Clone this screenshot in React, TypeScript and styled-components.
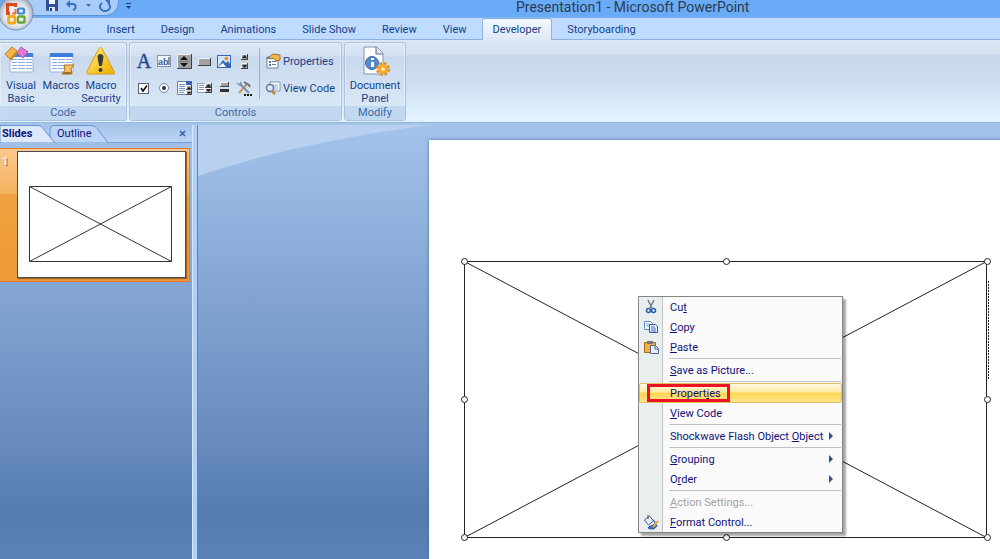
import React from "react";
import styled, { createGlobalStyle, css } from "styled-components";

const Global = createGlobalStyle`
  * { box-sizing: border-box; }
  body { margin: 0; font-family: Roboto, "Open Sans", sans-serif; font-size: 11px; line-height: 13px; color: #15428b; }
  button { font: inherit; color: inherit; background: none; border: 0; padding: 0; margin: 0; }
  svg { display: block; flex: none; }
`;

const Page = styled.div`
  display: flex;
  flex-direction: column;
  height: 100vh;
  overflow: hidden;
`;

const TitleBar = styled.header`
  position: relative;
  display: flex;
  align-items: flex-start;
  height: 18px;
  flex: none;
  background: #6aabf7;
  border-bottom: 1px solid #7fb3f3;
`;

const Title = styled.h1`
  flex: 1;
  margin: 0;
  padding-left: 377px;
  font-size: 14px;
  line-height: 14px;
  font-weight: 400;
  color: #2c3b52;
  white-space: nowrap;
`;

const Orb = styled.button`
  position: absolute;
  left: -2px;
  top: -5px;
  z-index: 2;
`;

const QuickAccess = styled.div`
  display: flex;
  align-items: center;
  gap: 8px;
  width: 92px;
  height: 16px;
  margin-left: 27px;
  padding: 0 12px 4px 18px;
  background: #a9cdf9;
  border: 1px solid #5c93db;
  border-top: 0;
  border-radius: 0 0 14px 0;
`;

const More = styled.button`
  padding-left: 6px;
  height: 12px;
  width: 20px;
`;

const TabBar = styled.nav`
  display: flex;
  align-items: flex-end;
  height: 22px;
  flex: none;
  padding-left: 40px;
  gap: 4px;
  background: #bfdbff;
  border-bottom: 1px solid #8db2e3;
`;

const Tab = styled.button<{ $active?: boolean }>`
  height: 21px;
  padding: 0 10px;
  border: 1px solid transparent;
  border-bottom: 0;
  border-radius: 3px 3px 0 0;
  white-space: nowrap;
  ${(p) =>
    p.$active &&
    css`
      height: 22px;
      margin-bottom: -1px;
      border-color: #8db2e3;
      background: linear-gradient(#f2f8ff, #dfe9f5);
    `}
`;

const Ribbon = styled.section`
  display: flex;
  gap: 2px;
  height: 83px;
  flex: none;
  padding: 2px 0;
  background: linear-gradient(#dbe6f3 0, #d5e1f0 14px, #c7d8ed 15px, #cfdff1 45px, #e2f3ff 78px, #e2f3ff);
  border-bottom: 1px solid #92b6dc;
`;

const GroupBody = styled.div`
  display: flex;
  flex: 1;
  padding: 0 3px;
`;

const Group = styled.div<{ $first?: boolean }>`
  display: flex;
  flex-direction: column;
  height: 79px;
  border: 1px solid #a9c3e2;
  border-radius: 3px;
  background: linear-gradient(#dee8f5 0, #d3e0f0 13px, #c9d9ed 14px, #d9e8f6 63px);
  box-shadow: inset 0 0 0 1px rgba(255, 255, 255, 0.35);
  ${(p) =>
    p.$first &&
    css`
      border-left: 0;
      border-radius: 0 3px 3px 0;
      ${GroupBody} { padding: 0 5px 0 1px; }
    `}
`;

const GroupLabel = styled.div`
  height: 14px;
  line-height: 14px;
  text-align: center;
  color: #3e6aaa;
  background: #c1d8f0;
  border-radius: 0 0 2px 2px;
`;

const BigButton = styled.button<{ $wide?: boolean }>`
  display: flex;
  flex-direction: column;
  align-items: center;
  gap: 1px;
  width: ${(p) => (p.$wide ? 54 : 40)}px;
  padding-top: 3px;
  span { white-space: nowrap; }
`;

const ToolGrid = styled.div`
  display: grid;
  grid-template-columns: repeat(6, 16px);
  grid-auto-rows: 16px;
  gap: 11px 4px;
  padding: 10px 7px 0 3px;
`;

const ToolButton = styled.button`
  width: 16px;
  height: 16px;
`;

const SideTools = styled.div`
  display: flex;
  flex-direction: column;
  gap: 11px;
  min-width: 79px;
  height: 51px;
  margin-top: 5px;
  padding: 5px 0 0 5px;
  border-left: 1px solid #8fb0de;
`;

const LineButton = styled.button`
  display: flex;
  align-items: center;
  gap: 2px;
  height: 16px;
  white-space: nowrap;
`;

const Work = styled.main`
  display: flex;
  flex: 1;
  min-height: 0;
  border-top: 2px solid #a5c4e8;
`;

const fade = css`
  background: linear-gradient(#a3c3ec, #84a5d3 38%, #688bbd 73%, #547cb0 89%, #5a82b8);
`;

const SlidePanel = styled.aside`
  display: flex;
  flex-direction: column;
  width: 192px;
  flex: none;
  ${fade}
`;

const PanelTabs = styled.div`
  position: relative;
  display: flex;
  height: 18px;
  flex: none;
  background: linear-gradient(#a5c3ea, #bcd4f4);
  border-bottom: 1px solid #7ba0d4;
`;

const PanelShapes = styled.svg`
  position: absolute;
  left: 0;
  top: 0;
`;

const PanelTab = styled.button<{ $bold?: boolean }>`
  position: relative;
  height: 17px;
  width: ${(p) => (p.$bold ? 43 : 62)}px;
  padding-left: ${(p) => (p.$bold ? 2 : 14)}px;
  text-align: left;
  font-weight: ${(p) => (p.$bold ? 700 : 400)};
  color: #10127c;
`;

const CloseButton = styled.button`
  margin-left: auto;
  padding-right: 6px;
`;

const Thumb = styled.button`
  display: flex;
  height: 134px;
  margin: 5px 2px 0 0;
  padding: 2px 3px 3px 0;
  background: linear-gradient(#fbc98c, #f3b25f 44px, #efa13f 46px, #ee9a34);
  border: 1px solid #e2782a;
  border-left: 0;
`;

const ThumbNumber = styled.span`
  width: 17px;
  flex: none;
  padding: 4px 0 0 2px;
  text-align: left;
  font-weight: 700;
  color: #fff;
  text-shadow: 1px 1px 0 #8d6b3c;
`;

const ThumbPage = styled.span`
  display: block;
  flex: 1;
  height: 127px;
  background: #fff;
  border: 1px solid #4b4b55;
  box-shadow: 1px 1px 1px #a06620;
  padding: 34px 13px 16px 11px;
`;

const Splitter = styled.div`
  width: 6px;
  flex: none;
  background: #aed0fb;
  border-left: 1px solid #d6e6fb;
  border-right: 1px solid #5585cd;
`;

const Stage = styled.div`
  position: relative;
  display: flex;
  flex: 1;
  min-width: 0;
  padding: 15px 0 0 231px;
  ${fade}
`;

const Swoosh = styled.svg`
  position: absolute;
  left: 0;
  top: 0;
`;

const Slide = styled.div`
  position: relative;
  flex: 1;
  background: #fff;
  box-shadow: 0 0 3px #49699a;
`;

const FlashObject = styled.div`
  position: absolute;
  left: 31px;
  top: 117px;
`;

const Menu = styled.div`
  position: absolute;
  left: 209px;
  top: 156px;
  width: 205px;
  border: 1px solid #868686;
  background: linear-gradient(90deg, #e9eeee 23px, #c5c5c5 23px, #c5c5c5 24px, #fafafa 24px);
  box-shadow: 3px 3px 2px rgba(0, 0, 0, 0.35);
`;

const MenuItem = styled.button<{ $hot?: boolean; $off?: boolean }>`
  position: relative;
  display: flex;
  align-items: center;
  width: 100%;
  height: 20px;
  padding: 0 7px 0 3px;
  border: 1px solid transparent;
  color: ${(p) => (p.$off ? "#a3a3a3" : "#10127c")};
  white-space: nowrap;
  ${(p) =>
    p.$hot &&
    css`
      border-color: #e3bd62;
      border-radius: 2px;
      background: linear-gradient(#fffbe3, #ffeaa0 45%, #ffd452 50%, #ffe68c);
    `}
`;

const MenuIcon = styled.span`
  width: 27px;
  flex: none;
`;

const MenuText = styled.span`
  flex: 1;
  text-align: left;
`;

const Sep = styled.div`
  height: 1px;
  margin: 1px 1px 1px 30px;
  background: #c0c0c0;
`;

const RedFrame = styled.span`
  position: absolute;
  left: 7px;
  top: 0;
  width: 83px;
  height: 18px;
  border: 3px solid #ea1424;
`;

const Svg = ({ s = 16, children }: { s?: number; children: React.ReactNode }) => (
  <svg width={s} height={s} viewBox={`0 0 ${s} ${s}`} aria-hidden="true">{children}</svg>
);

const OfficeOrb = () => (
  <svg width="38" height="38" viewBox="0 0 38 38" aria-hidden="true">
    <defs>
      <radialGradient id="orb" cx="50%" cy="55%" r="50%">
        <stop offset="0" stopColor="#fff" /><stop offset="0.7" stopColor="#e2e6ee" /><stop offset="1" stopColor="#a9b4c6" />
      </radialGradient>
    </defs>
    <circle cx="18" cy="18" r="17" fill="url(#orb)" stroke="#7b8ca8" />
    <g fill="none">
      <path d="M17.500 12V9.500h-8v9H12" stroke="#dc4a1c" strokeWidth="3" />
      <path d="M17.500 14v4.500H14" stroke="#e8703a" strokeWidth="2" />
      <rect x="20" y="13.500" width="6" height="5" rx="1" stroke="#3b84d4" strokeWidth="2.200" />
      <rect x="10.500" y="21.500" width="6.500" height="6.500" rx="1" stroke="#f2ab16" strokeWidth="2.800" />
      <rect x="20" y="21.500" width="6.500" height="6" rx="1" stroke="#6aa63c" strokeWidth="2.400" />
    </g>
  </svg>
);

const Save = () => (
  <Svg s={12}><path d="M0 0h12v11H1L0 10z" fill="#2f4fa0" /><path d="M3 0h6v4H3z" fill="#fff" /><path d="M3 7h6v4H3z" fill="#dfe6f5" /><path d="M4 8h2v3H4z" fill="#223a80" /></Svg>
);
const Undo = () => (
  <Svg s={12}><path d="M2 4h5c3 0 4 5 0 6" fill="none" stroke="#3a6fc4" strokeWidth="2" /><path d="M0 4l4-4v8z" fill="#3a6fc4" /></Svg>
);
const Redo = () => (
  <Svg s={12}><path d="M9 3a5 4.500 0 1 1-6 0" fill="none" stroke="#3a6fc4" strokeWidth="2" /><path d="M6 0h5v5z" fill="#3a6fc4" /></Svg>
);

const Sheet = () => (
  <>
    <path d="M5 8h23v18H5z" fill="#fff" stroke="#9db3d6" />
    <path d="M5 7h23v4H5z" fill="#3f7fdb" />
    <path d="M7 13h5v1H7zm6 0h7v1h-7zm8 0h6v1h-6zM7 16h5v1H7zm6 0h7v1h-7zm8 0h6v1h-6zM7 19h5v1H7zm6 0h7v1h-7zm8 0h6v1h-6zM7 22h5v1H7zm6 0h7v1h-7zm8 0h6v1h-6z" fill="#8ea9d8" />
  </>
);
const VisualBasic = () => (
  <Svg s={32}><Sheet /><path d="M0 8l7-7 5 4-7 8z" fill="#f4b64a" stroke="#c07c18" /><path d="M5 13l7-8v3l-6 7z" fill="#c98a24" /><path d="M16 1l7 5-5 6-6-5z" fill="#e17cd6" stroke="#b650ad" /></Svg>
);
const Macros = () => (
  <Svg s={32}><Sheet /><path d="M19 19h10l-3 4 1 5H17l3-4z" fill="#f3c163" stroke="#a86e1c" /><path d="M18 27h8" stroke="#a86e1c" strokeWidth="2" /></Svg>
);
const Warning = () => (
  <svg width="32" height="32" viewBox="0 0 32 32" aria-hidden="true">
    <defs><linearGradient id="warn" x2="1" y2="1"><stop offset="0" stopColor="#fff27a" /><stop offset="1" stopColor="#f0aa00" /></linearGradient></defs>
    <path d="M15.500 1.500c.8 0 1.300.5 1.700 1.200l12 23c.8 1.600.1 2.300-1.200 2.300H3c-1.300 0-2-.8-1.200-2.300l12-23c.4-.7.900-1.200 1.700-1.200z" fill="url(#warn)" stroke="#d79a16" />
    <path d="M12.500 11c0-4 6-4 6 0l-1.600 9h-2.800z" fill="#3b3b3b" /><circle cx="15.500" cy="24" r="2" fill="#3b3b3b" />
  </svg>
);
const DocPanel = () => (
  <Svg s={32}>
    <path d="M5 1h13l6 6v21H5z" fill="#fcfdff" stroke="#8794ad" /><path d="M17 1v7h7" fill="#dfe6f2" stroke="#5c6c8c" />
    <circle cx="13" cy="17" r="6.500" fill="#5788c8" stroke="#3b6bb0" /><path d="M12 16h3v5h-3zM12 12h3v2h-3z" fill="#fff" />
    <circle cx="24" cy="23" r="5.500" fill="none" stroke="#d98d15" strokeWidth="3" strokeDasharray="2.600 1.720" />
    <circle cx="24" cy="23" r="3.600" fill="#fce39a" stroke="#f0ab2c" strokeWidth="3" />
  </Svg>
);

const TextGlyph = styled.span`
  display: block;
  font-family: "Liberation Serif", serif;
  font-size: 20px;
  line-height: 16px;
  font-weight: 400;
  color: #24488c;
  -webkit-text-stroke: 0.4px #24488c;
`;

const raised = (x: number, y: number, w: number, h: number) => (
  <>
    <rect x={x} y={y} width={w} height={h} fill="#444" />
    <rect x={x} y={y} width={w - 1} height={h - 1} fill="#f2f2f2" />
    <rect x={x + 1} y={y + 1} width={w - 2} height={h - 2} fill="#a2a2a2" />
  </>
);

const tools: { name: string; icon: React.ReactNode }[] = [
  { name: "Label", icon: <TextGlyph>A</TextGlyph> },
  { name: "Text Box", icon: <Svg><rect x="1.500" y="2.500" width="13" height="11" fill="#f4f7fc" stroke="#8291ad" /><text x="2" y="12" fontSize="9" fontWeight="700" fontFamily="Liberation Sans, sans-serif" fill="#3a5fa5">ab</text><path d="M13 4v8" stroke="#333" /></Svg> },
  { name: "Spin Button", icon: <Svg>{raised(1, 1, 15, 15)}<path d="M4 7l4-4 4 4zM4 10l4 4 4-4z" fill="#111" /><path d="M2 8h12v1H2z" fill="#777" /></Svg> },
  { name: "Command Button", icon: <Svg>{raised(2, 5, 13, 8)}</Svg> },
  { name: "Image", icon: <Svg><rect x="1.500" y="2.500" width="13" height="12" fill="#d6e8ff" stroke="#3a66b5" /><path d="M2 14l5-7 3 3 2-2 2 3v3z" fill="#3568b4" /><path d="M2 14l5-4 3 4z" fill="#fff" /><circle cx="10.500" cy="5.500" r="2" fill="#f0893a" /></Svg> },
  { name: "Scroll Bar", icon: <Svg>{raised(5, 1, 7, 6)}{raised(5, 10, 7, 6)}<path d="M6 5l2.500-3L11 5zM6 12l2.500 3 2.500-3z" fill="#222" /><path d="M6 7h5v3H6z" fill="#c9cdd4" /></Svg> },
  { name: "Check Box", icon: <Svg><rect x="2.500" y="3.500" width="10" height="10" fill="#fff" stroke="#53617c" /><path d="M5 8l2 3L11 5.500" fill="none" stroke="#111" strokeWidth="1.600" /></Svg> },
  { name: "Option Button", icon: <Svg><circle cx="8" cy="8" r="4.500" fill="#f4f8ff" stroke="#7585a5" /><circle cx="8" cy="8" r="2" fill="#333" /></Svg> },
  { name: "List Box", icon: <Svg><rect x="1.500" y="1.500" width="14" height="13" fill="#fff" stroke="#6d84ae" /><path d="M3 4.500h6M3 6.500h6M3 8.500h6M3 10.500h6M3 12.500h5" stroke="#7c97c6" />{raised(10, 5, 6, 5)}{raised(10, 10, 6, 5)}<path d="M10 1h6v4h-6z" fill="#3a63ad" /><path d="M11 9l2-2 2 2zM11 12l2 2 2-2z" fill="#111" /></Svg> },
  { name: "Combo Box", icon: <Svg><rect x="1.500" y="3.500" width="14" height="9" fill="#fff" stroke="#8ba0c4" /><path d="M3 5.500h5M3 7.500h5M3 9.500h5" stroke="#7c97c6" />{raised(9, 3, 7, 5)}{raised(9, 8, 7, 5)}<path d="M10 7l2.500-3L15 7zM10 9l2.500 3L15 9z" fill="#222" /></Svg> },
  { name: "Toggle Button", icon: <Svg>{raised(4, 2, 9, 5)}<path d="M4 9h9v3H4z" fill="#333" /><path d="M4 12h8v3H4z" fill="#e6e6e6" /></Svg> },
  { name: "More Controls", icon: <Svg><path d="M3 13L11 4" stroke="#c89a5a" strokeWidth="2" /><path d="M8 2l5 3 1 2" fill="none" stroke="#66758f" strokeWidth="2" /><path d="M4 4l9 9" stroke="#7d8ca6" strokeWidth="2" /><path d="M1 3l3 2 1-3" fill="none" stroke="#7d8ca6" strokeWidth="1.500" /><path d="M8 14h2v2H8zm3 0h2v2h-2zm3 0h2v2h-2z" fill="#111" /></Svg> },
];

const PropsIcon = () => (
  <Svg><path d="M2 4h11v11H2z" fill="#fff" stroke="#6c7f9f" /><path d="M2 4h11v2H2z" fill="#5280c8" /><path d="M4 8h2v2H4zm0 3h2v2H4zM7 8h4v1H7zm0 3h4v1H7z" fill="#5b79ab" /><path d="M4 4l4-3 7 1v5l-4 1-3-3-3 1z" fill="#f2b850" stroke="#a3702a" /></Svg>
);
const CodeIcon = () => (
  <Svg><path d="M5 2h10v9H5z" fill="#fff" stroke="#7f93b5" /><path d="M7 5h6M7 7h6M9 9h4" stroke="#92a8cd" /><circle cx="5" cy="8" r="3.500" fill="#dceaff" stroke="#607596" strokeWidth="1.400" /><path d="M7 11l3 3" stroke="#c8823c" strokeWidth="2.500" /></Svg>
);
const CutIcon = () => (
  <Svg><path d="M5 1l4 8M11 1L7 9" stroke="#6c7c96" strokeWidth="1.500" /><circle cx="5.500" cy="11.500" r="2" fill="none" stroke="#2d5cb0" strokeWidth="1.600" /><circle cx="10.500" cy="11.500" r="2" fill="none" stroke="#2d5cb0" strokeWidth="1.600" /></Svg>
);
const CopyIcon = () => (
  <Svg><path d="M1.500 2.500h6l2 2v6h-8z" fill="#fff" stroke="#5c86c8" /><path d="M3 5h4M3 7h4" stroke="#7ba2dc" /><path d="M6.500 5.500h6l2 2v6h-8z" fill="#eaf2ff" stroke="#33599e" /><path d="M8 8h4M8 10h5M8 12h5" stroke="#3d71c4" /></Svg>
);
const PasteIcon = () => (
  <Svg><path d="M1.500 3.500h11v10h-11z" fill="#eeb040" stroke="#a36c14" /><path d="M4 2h6v3H4z" fill="#777" /><path d="M7.500 6.500h5l3 3v5h-8z" fill="#e6eefb" stroke="#516387" /><path d="M12 7v3h3" fill="none" stroke="#516387" /></Svg>
);
const FormatIcon = () => (
  <Svg><path d="M1.500 6l5-4 4 5-5 4z" fill="#e6edf8" stroke="#4a5f87" /><path d="M5 5V1" stroke="#3b4c70" /><path d="M10 6c3 1 2 4 0 5-2 1-4 1-5 3 4 2 8 1 9-3" fill="#3e73c4" stroke="#254f96" /><path d="M10 13l5-6" stroke="#e9a83a" strokeWidth="2" /></Svg>
);

type Item = { label?: [string, string, string]; icon?: React.ReactNode; sub?: boolean; hot?: boolean; off?: boolean };
const items: Item[] = [
  { label: ["Cu", "t", ""], icon: <CutIcon /> },
  { label: ["", "C", "opy"], icon: <CopyIcon /> },
  { label: ["", "P", "aste"], icon: <PasteIcon /> },
  {},
  { label: ["", "S", "ave as Picture..."] },
  {},
  { label: ["Propert", "i", "es"], hot: true },
  { label: ["", "V", "iew Code"] },
  {},
  { label: ["Shockwave Flash Object ", "O", "bject"], sub: true },
  {},
  { label: ["", "G", "rouping"], sub: true },
  { label: ["O", "r", "der"], sub: true },
  {},
  { label: ["", "A", "ction Settings..."], off: true },
  { label: ["", "F", "ormat Control..."], icon: <FormatIcon /> },
];

const tabs = ["Home", "Insert", "Design", "Animations", "Slide Show", "Review", "View", "Developer", "Storyboarding"];

const handles = [[4, 4], [266, 4], [527, 4], [4, 142], [527, 142], [4, 280], [266, 280], [527, 280]];

export default function App() {
  return (
    <Page>
      <Global />
      <TitleBar>
        <Orb aria-label="Office Button"><OfficeOrb /></Orb>
        <QuickAccess>
          <button aria-label="Save"><Save /></button>
          <button aria-label="Undo"><Undo /></button>
          <button aria-label="Undo history"><svg width="5" height="3"><path d="M0 0h5L2.500 3z" fill="#3a6fc4" /></svg></button>
          <button aria-label="Repeat"><Redo /></button>
        </QuickAccess>
        <More aria-label="Customize Quick Access Toolbar">
          <svg width="7" height="8"><path d="M1 1h5v1H1zM1 4h5L3.500 7z" fill="#1f3f80" /></svg>
        </More>
        <Title>Presentation1 - Microsoft PowerPoint</Title>
      </TitleBar>
      <TabBar>
        {tabs.map((t) => <Tab key={t} $active={t === "Developer"}>{t}</Tab>)}
      </TabBar>
      <Ribbon>
        <Group $first>
          <GroupBody>
            <BigButton><VisualBasic /><span>Visual<br />Basic</span></BigButton>
            <BigButton><Macros /><span>Macros</span></BigButton>
            <BigButton><Warning /><span>Macro<br />Security</span></BigButton>
          </GroupBody>
          <GroupLabel>Code</GroupLabel>
        </Group>
        <Group>
          <GroupBody>
            <ToolGrid>
              {tools.map((t) => <ToolButton key={t.name} aria-label={t.name}>{t.icon}</ToolButton>)}
            </ToolGrid>
            <SideTools>
              <LineButton><PropsIcon />Properties</LineButton>
              <LineButton><CodeIcon />View Code</LineButton>
            </SideTools>
          </GroupBody>
          <GroupLabel>Controls</GroupLabel>
        </Group>
        <Group>
          <GroupBody>
            <BigButton $wide><DocPanel /><span>Document<br />Panel</span></BigButton>
          </GroupBody>
          <GroupLabel>Modify</GroupLabel>
        </Group>
      </Ribbon>
      <Work>
        <SlidePanel>
          <PanelTabs>
            <PanelShapes width="120" height="18" aria-hidden="true">
              <path d="M50 17.500V4q0-3.500 4-3.500h38q3 0 5 3l11 14" fill="#bdd5f6" stroke="#6b94cf" />
              <path d="M0 .5h38q3 0 5 3l12 14.500H0z" fill="#dbe9fb" stroke="#6b94cf" />
            </PanelShapes>
            <PanelTab $bold>Slides</PanelTab>
            <PanelTab>Outline</PanelTab>
            <CloseButton aria-label="Close">
              <svg width="7" height="7"><path d="M1 1l5 5M6 1L1 6" stroke="#3c62a0" strokeWidth="1.600" /></svg>
            </CloseButton>
          </PanelTabs>
          <Thumb aria-label="Slide 1">
            <ThumbNumber>1</ThumbNumber>
            <ThumbPage>
              <svg width="143" height="76" aria-hidden="true"><path d="M.5.5h142v75H.5zl142 75M142.500.5L.5 75.500" fill="none" stroke="#333" /></svg>
            </ThumbPage>
          </Thumb>
        </SlidePanel>
        <Splitter />
        <Stage>
          <Swoosh width="232" height="52" aria-hidden="true"><path d="M0 0h232Q100 17 0 51z" fill="#b9d0f0" /></Swoosh>
          <Slide>
            <FlashObject>
              <svg width="532" height="285" aria-label="Shockwave Flash Object">
                <path d="M4.500 4.500h522v276h-522zl522 276M526.500 4.500l-522 276" fill="none" stroke="#222" />
                <path d="M528.500 24v98" stroke="#222" strokeDasharray="2 1" />
                {handles.map(([x, y]) => <circle key={`${x}-${y}`} cx={x + 0.5} cy={y + 0.5} r="3" fill="#fff" stroke="#222" />)}
              </svg>
            </FlashObject>
            <Menu role="menu">
              {items.map((it, i) =>
                it.label ? (
                  <MenuItem key={i} role="menuitem" $hot={it.hot} $off={it.off} disabled={it.off}>
                    <MenuIcon>{it.icon}</MenuIcon>
                    <MenuText>{it.label[0]}<u>{it.label[1]}</u>{it.label[2]}</MenuText>
                    {it.sub && <svg width="5" height="8"><path d="M0 0l4 4-4 4z" fill="#2f4f94" /></svg>}
                    {it.hot && <RedFrame />}
                  </MenuItem>
                ) : (
                  <Sep key={i} role="separator" />
                )
              )}
            </Menu>
          </Slide>
        </Stage>
      </Work>
    </Page>
  );
}
